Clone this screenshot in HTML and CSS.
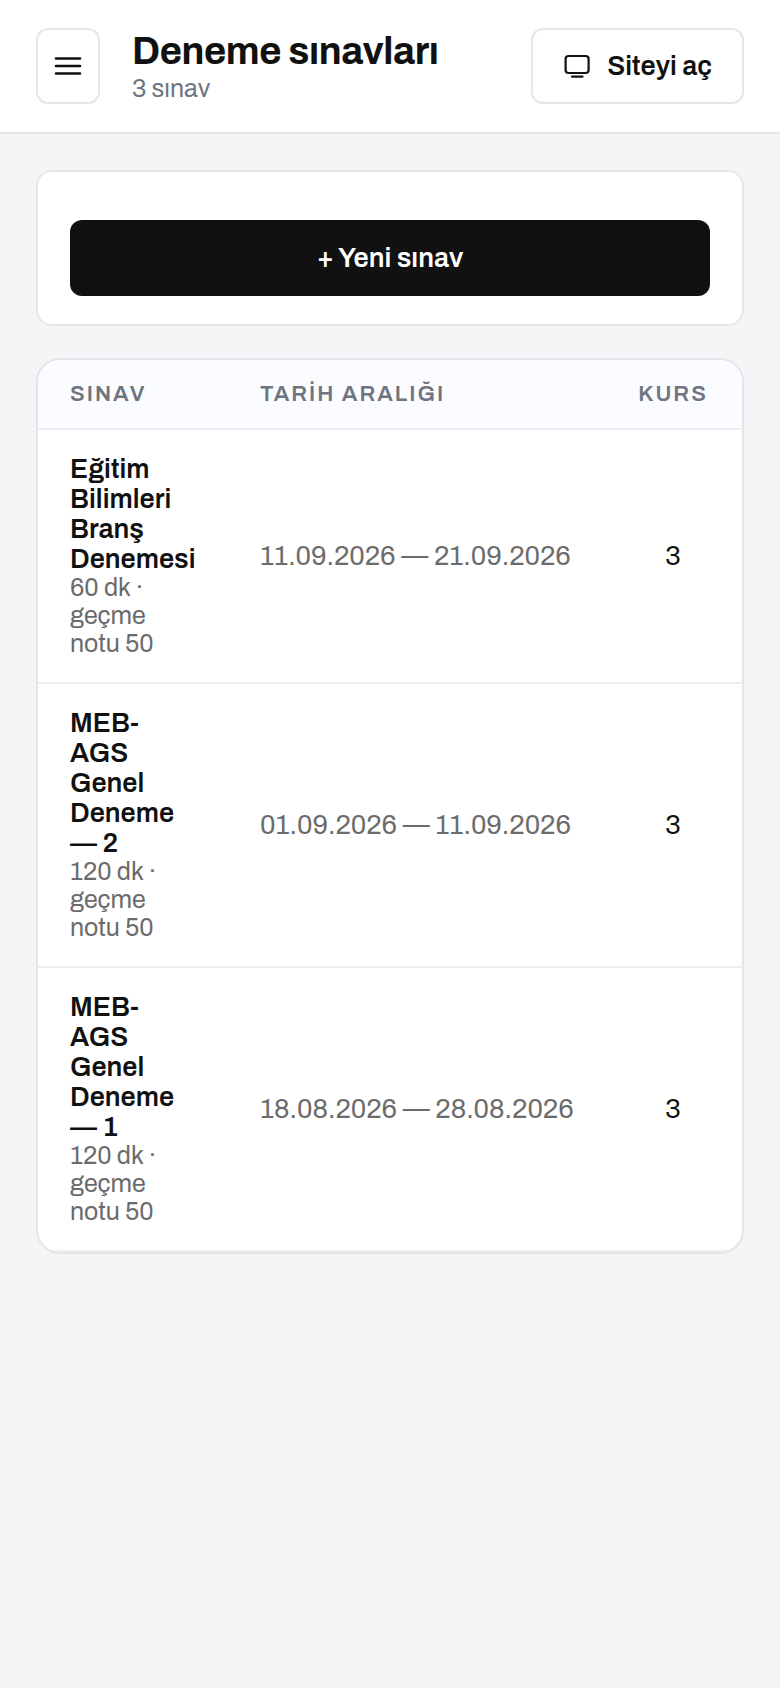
FILE: index.html
```html
<!DOCTYPE html>
<html lang="tr">
<head>
  <meta charset="UTF-8">
  <meta name="viewport" content="width=device-width, initial-scale=1">
  <title>Deneme sınavları</title>
  <link rel="stylesheet" href="styles.css">
</head>
<body>
  <header class="topbar">
    <button type="button" class="btn menu-btn" aria-label="Menü">
      <svg width="32" height="32" viewBox="0 0 32 32" fill="none" stroke="currentColor" stroke-width="2.6" stroke-linecap="round">
        <path d="M4 8.5h24M4 16h24M4 23.5h24"/>
      </svg>
    </button>
    <div class="heading">
      <h1>Deneme sınavları</h1>
      <p>3 sınav</p>
    </div>
    <a href="#" class="btn site-btn">
      <svg width="28" height="28" viewBox="0 0 28 28" fill="none" stroke="currentColor" stroke-width="2.2" stroke-linecap="round" stroke-linejoin="round">
        <rect x="2.6" y="4" width="23" height="17" rx="3"/>
        <path d="M9 24.6h10.5"/>
      </svg>
      Siteyi aç
    </a>
  </header>

  <main>
    <section class="card">
      <button type="button" class="btn new-btn">+ Yeni sınav</button>
    </section>

    <section class="table-card">
      <table>
        <thead>
          <tr>
            <th class="col-exam">SINAV</th>
            <th>TARİH ARALIĞI</th>
            <th class="col-course">KURS</th>
          </tr>
        </thead>
        <tbody>
          <tr>
            <td><strong>Eğitim Bilimleri Branş Denemesi</strong><small>60 dk · geçme notu&nbsp;50</small></td>
            <td class="dates">11.09.2026 — 21.09.2026</td>
            <td class="col-course">3</td>
          </tr>
          <tr>
            <td><strong>MEB-<br>AGS Genel Deneme —&nbsp;2</strong><small>120 dk · geçme notu&nbsp;50</small></td>
            <td class="dates">01.09.2026 — 11.09.2026</td>
            <td class="col-course">3</td>
          </tr>
          <tr>
            <td><strong>MEB-<br>AGS Genel Deneme —&nbsp;1</strong><small>120 dk · geçme notu&nbsp;50</small></td>
            <td class="dates">18.08.2026 — 28.08.2026</td>
            <td class="col-course">3</td>
          </tr>
        </tbody>
      </table>
    </section>
  </main>
</body>
</html>
```
FILE: styles.css
```css
* {
  box-sizing: border-box;
}

body {
  margin: 0;
  background: #f3f5f7;
  color: #111;
  font-family: Archivo, "Liberation Sans", Arial, sans-serif;
  font-size: 27px;
  line-height: 30px;
}

.topbar {
  display: flex;
  align-items: center;
  padding: 28px 36px;
  background: #fff;
  border-bottom: 2px solid #e5e7e9;
}

.btn {
  display: flex;
  align-items: center;
  justify-content: center;
  height: 76px;
  border: 2px solid #e5e6e8;
  border-radius: 12px;
  background: #fff;
  color: #111;
  font: inherit;
  font-weight: 600;
  text-decoration: none;
}

.menu-btn {
  width: 64px;
  padding: 0;
}

.heading {
  flex: 1;
  margin-left: 32px;
}

.heading h1 {
  margin: 0;
  font-size: 38px;
  font-weight: 700;
  line-height: 46px;
  letter-spacing: -0.01em;
}

.heading p {
  margin: 0;
  color: #6f7480;
  font-size: 25px;
  line-height: 28px;
}

.site-btn {
  gap: 16px;
  padding: 0 30px;
}

main {
  display: flex;
  flex-direction: column;
  gap: 32px;
  padding: 36px;
}

.card {
  padding: 48px 32px 28px;
  background: #fff;
  border: 2px solid #e5e7e9;
  border-radius: 16px;
}

.new-btn {
  width: 100%;
  border: 0;
  background: #111;
  color: #fff;
}

.table-card {
  overflow: hidden;
  background: #fff;
  border: 2px solid #e3e5e8;
  border-radius: 24px;
}

table {
  width: 100%;
  table-layout: fixed;
  border-collapse: separate;
  border-spacing: 0;
}

th,
td {
  padding: 24px 32px;
  border-bottom: 2px solid #eceef0;
  text-align: left;
}

th {
  background: #fafcff;
  color: #6f7480;
  font-size: 22px;
  font-weight: 600;
  line-height: 20px;
  letter-spacing: 2px;
}

.col-exam {
  width: 190px;
}

.col-course {
  width: 138px;
  text-align: center;
}

td strong,
td small {
  display: block;
}

td strong {
  font-weight: 600;
}

td small {
  color: #6b6b6b;
  font-size: 25px;
  line-height: 28px;
}

.dates {
  color: #6b6b6b;
  white-space: nowrap;
}
```
